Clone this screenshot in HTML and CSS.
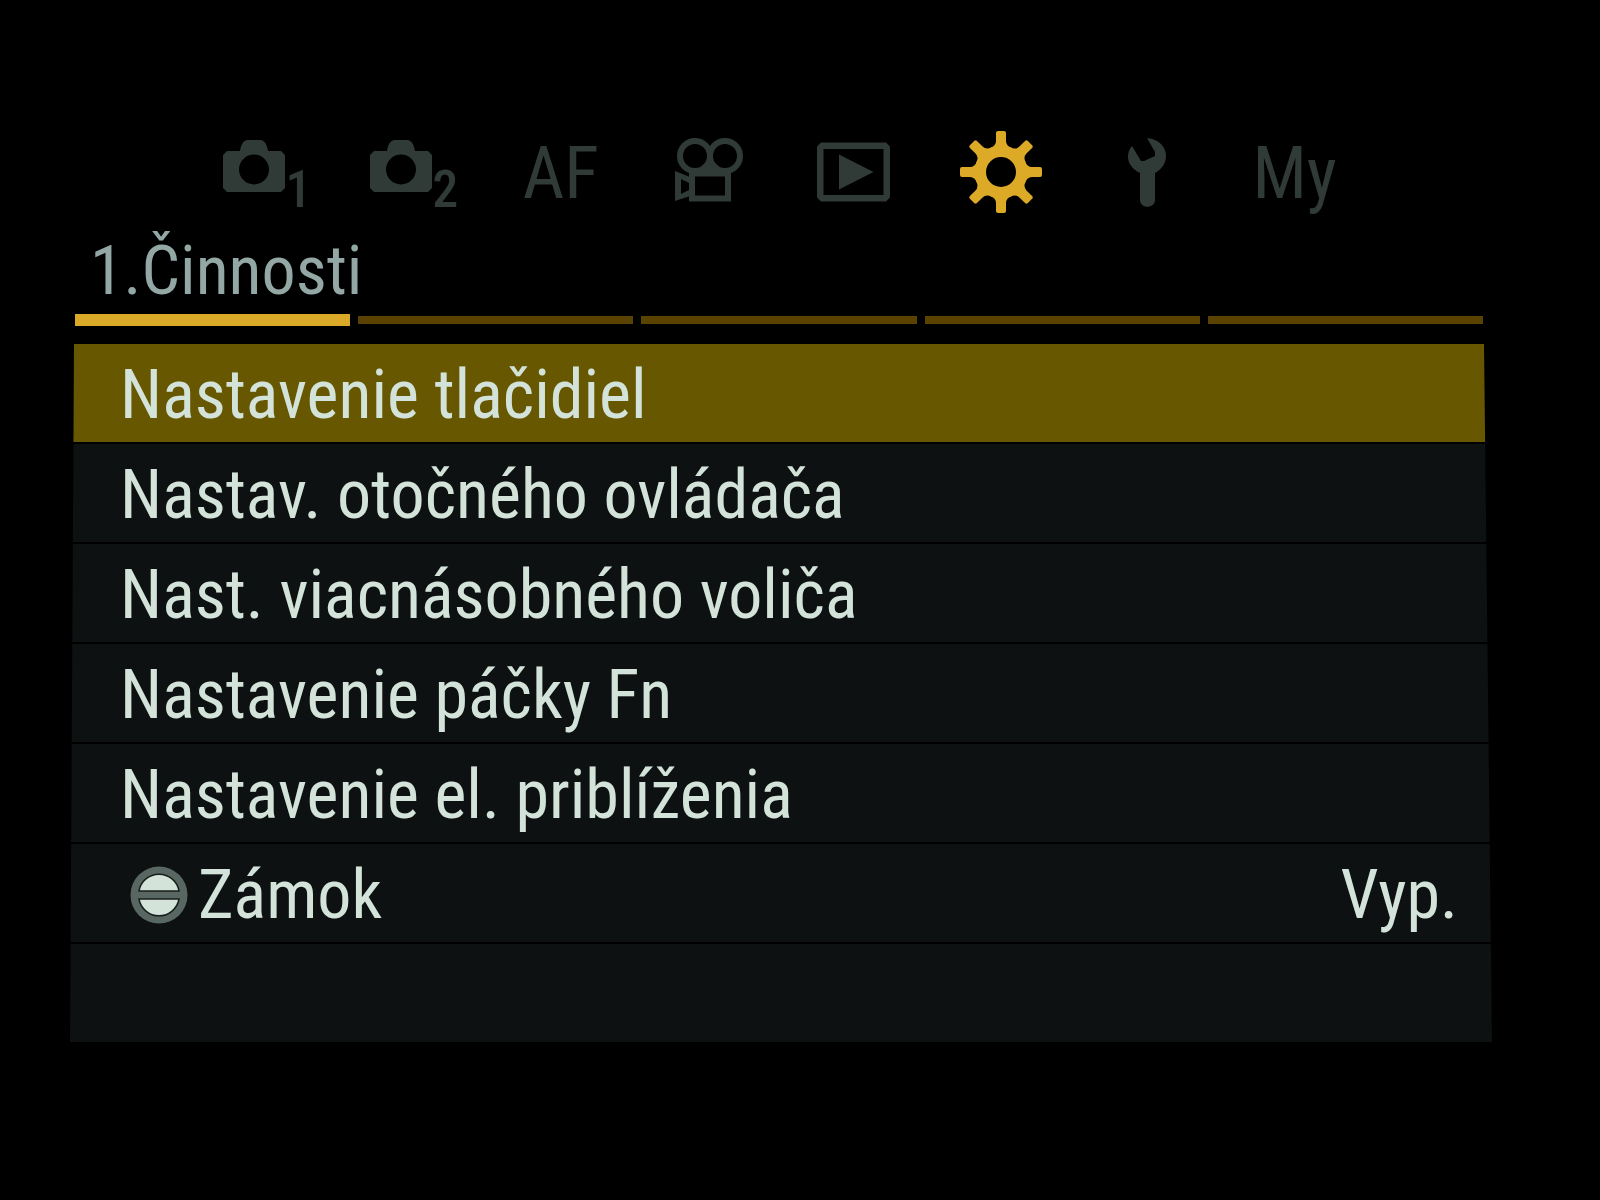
FILE: index.html
```html
<!DOCTYPE html>
<html lang="sk">
<head>
    <meta charset="UTF-8">
    <title>Nastavenie tlačidiel</title>
    <link rel="stylesheet" href="styles.css">
</head>
<body>
    <main class="screen">
        <nav class="tabs">
            <button class="tab" type="button">
                <svg class="icon-camera" viewBox="0 0 62 84" aria-hidden="true">
                    <path fill="currentColor" fill-rule="evenodd" d="M4 21H17C18 15 20 10 25 10H37C42 10 44 15 45 21H58L62 25V58L58 62H4L0 58V25ZM31 24.500A15 15 0 1 0 31 54.500A15 15 0 1 0 31 24.500Z"/>
                </svg>
                <span class="digit">1</span>
            </button>
            <button class="tab" type="button">
                <svg class="icon-camera" viewBox="0 0 62 84" aria-hidden="true">
                    <path fill="currentColor" fill-rule="evenodd" d="M4 21H17C18 15 20 10 25 10H37C42 10 44 15 45 21H58L62 25V58L58 62H4L0 58V25ZM31 24.500A15 15 0 1 0 31 54.500A15 15 0 1 0 31 24.500Z"/>
                </svg>
                <span class="digit">2</span>
            </button>
            <button class="tab" type="button">AF</button>
            <button class="tab" type="button" aria-label="Video">
                <svg class="icon" viewBox="0 0 84 84" aria-hidden="true">
                    <g fill="none" stroke="currentColor">
                        <circle cx="29" cy="26" r="15" stroke-width="6"/>
                        <circle cx="59" cy="26" r="15" stroke-width="6"/>
                        <path stroke-width="6" d="M26 43.500H62V68.500H26Z"/>
                    </g>
                    <path fill="currentColor" d="M38 34L44 29L50 34L58 43H30Z"/>
                    <path fill="currentColor" fill-rule="evenodd" d="M9 41L24 47V66L9 71ZM15 49V64L23 60V53Z"/>
                </svg>
            </button>
            <button class="tab" type="button" aria-label="Prehrávanie">
                <svg class="icon" viewBox="0 0 84 84" aria-hidden="true">
                    <path fill="currentColor" fill-rule="evenodd" d="M9 12.500H74L78 16.500V67.500L74 71.500H9L5 67.500V16.500ZM11.500 19V65H71.500V19Z"/>
                    <path fill="currentColor" d="M27 24.500L61.500 42L27 59.500Z"/>
                </svg>
            </button>
            <button class="tab tab-active" type="button" aria-label="Používateľské nastavenia">
                <svg class="icon" viewBox="0 0 84 84" aria-hidden="true">
                    <defs>
                        <path id="tooth" d="M37 3Q37 1 39 1H45Q47 1 47 3V11Q47 16 53 18L42 24L31 18Q37 16 37 11Z"/>
                    </defs>
                    <g fill="currentColor">
                        <use href="#tooth"/>
                        <use href="#tooth" transform="rotate(45 42 42)"/>
                        <use href="#tooth" transform="rotate(90 42 42)"/>
                        <use href="#tooth" transform="rotate(135 42 42)"/>
                        <use href="#tooth" transform="rotate(180 42 42)"/>
                        <use href="#tooth" transform="rotate(225 42 42)"/>
                        <use href="#tooth" transform="rotate(270 42 42)"/>
                        <use href="#tooth" transform="rotate(315 42 42)"/>
                    </g>
                    <circle cx="42" cy="42" r="20.500" fill="none" stroke="currentColor" stroke-width="11"/>
                </svg>
            </button>
            <button class="tab" type="button" aria-label="Nastavenie">
                <svg class="icon" viewBox="0 0 84 84" aria-hidden="true">
                    <path fill="currentColor" d="M41 8C53 9 60 17 60 26C60 33 56 39 49 43V70C49 79 34 79 34 70V43C26 39 22 33 22 27C22 23 23 19 26 16L35 31H38L49 26V22Z"/>
                </svg>
            </button>
            <button class="tab" type="button">My</button>
        </nav>

        <h1 class="title">1.Činnosti</h1>

        <div class="pages">
            <span class="page page-active"></span>
            <span class="page"></span>
            <span class="page"></span>
            <span class="page"></span>
            <span class="page"></span>
        </div>

        <ul class="menu">
            <li><button class="row row-selected" type="button">Nastavenie tlačidiel</button></li>
            <li><button class="row" type="button">Nastav. otočného ovládača</button></li>
            <li><button class="row" type="button">Nast. viacnásobného voliča</button></li>
            <li><button class="row" type="button">Nastavenie páčky Fn</button></li>
            <li><button class="row" type="button">Nastavenie el. priblíženia</button></li>
            <li>
                <button class="row" type="button">
                    <svg class="icon-lock" viewBox="0 0 58 58" aria-hidden="true">
                        <circle cx="29" cy="29" r="28.500" fill="#596762"/>
                        <g fill="#d3e3da" stroke="#171e1c" stroke-width="1.500">
                            <path d="M9 25A20.300 20.300 0 0 1 49 25Z"/>
                            <path d="M9 33A20.300 20.300 0 0 0 49 33Z"/>
                        </g>
                    </svg>
                    <span>Zámok</span>
                    <span class="value">Vyp.</span>
                </button>
            </li>
            <li class="row"></li>
        </ul>
    </main>
</body>
</html>
```
FILE: styles.css
```css
body {
    margin: 0;
    background-color: #000;
    color: #d3e3da;
    font-family: "Roboto Condensed", "Roboto", sans-serif;
    font-size: 68px;
}
button {
    margin: 0;
    padding: 0;
    border: none;
    background: none;
    color: inherit;
    font: inherit;
    cursor: pointer;
}
.screen {
    padding: 130px 108px 0 70px;
}
.tabs {
    display: grid;
    grid-template-columns: repeat(8, 1fr);
    padding: 0 124px;
}
.tab {
    display: flex;
    justify-content: center;
    height: 84px;
    color: #303b38;
    font-size: 72px;
    line-height: 88px;
}
.tab-active {
    color: #dcaa27;
}
.icon {
    width: 84px;
    height: 84px;
}
.icon-camera {
    width: 62px;
    height: 84px;
}
.digit {
    align-self: flex-end;
    font-size: 52px;
    font-weight: 500;
    line-height: 48px;
}
.title {
    margin: 0;
    padding: 14px 20px 0;
    color: #93a8a5;
    font-size: 68px;
    font-weight: normal;
    line-height: 86px;
}
.pages {
    display: grid;
    grid-template-columns: repeat(5, 1fr);
    align-items: center;
    gap: 8px;
    margin: 0 9px 18px 5px;
}
.page {
    height: 8px;
    background-color: #5a4300;
}
.page-active {
    height: 12px;
    background-color: #daa928;
}
/* the list gets slightly wider towards the bottom */
.menu {
    display: flex;
    flex-direction: column;
    gap: 2px;
    margin: 0;
    padding: 0;
    list-style: none;
    clip-path: polygon(4px 0, calc(100% - 8px) 0, 100% 100%, 0 100%);
}
.row {
    display: flex;
    align-items: center;
    box-sizing: border-box;
    width: 100%;
    height: 98px;
    padding: 4px 34px 0 50px;
    background-color: #0d1111;
    text-align: left;
    white-space: nowrap;
}
.row-selected {
    background-color: #665700;
}
.icon-lock {
    width: 58px;
    height: 58px;
    margin: 0 10px;
}
.value {
    margin-left: auto;
}
```
